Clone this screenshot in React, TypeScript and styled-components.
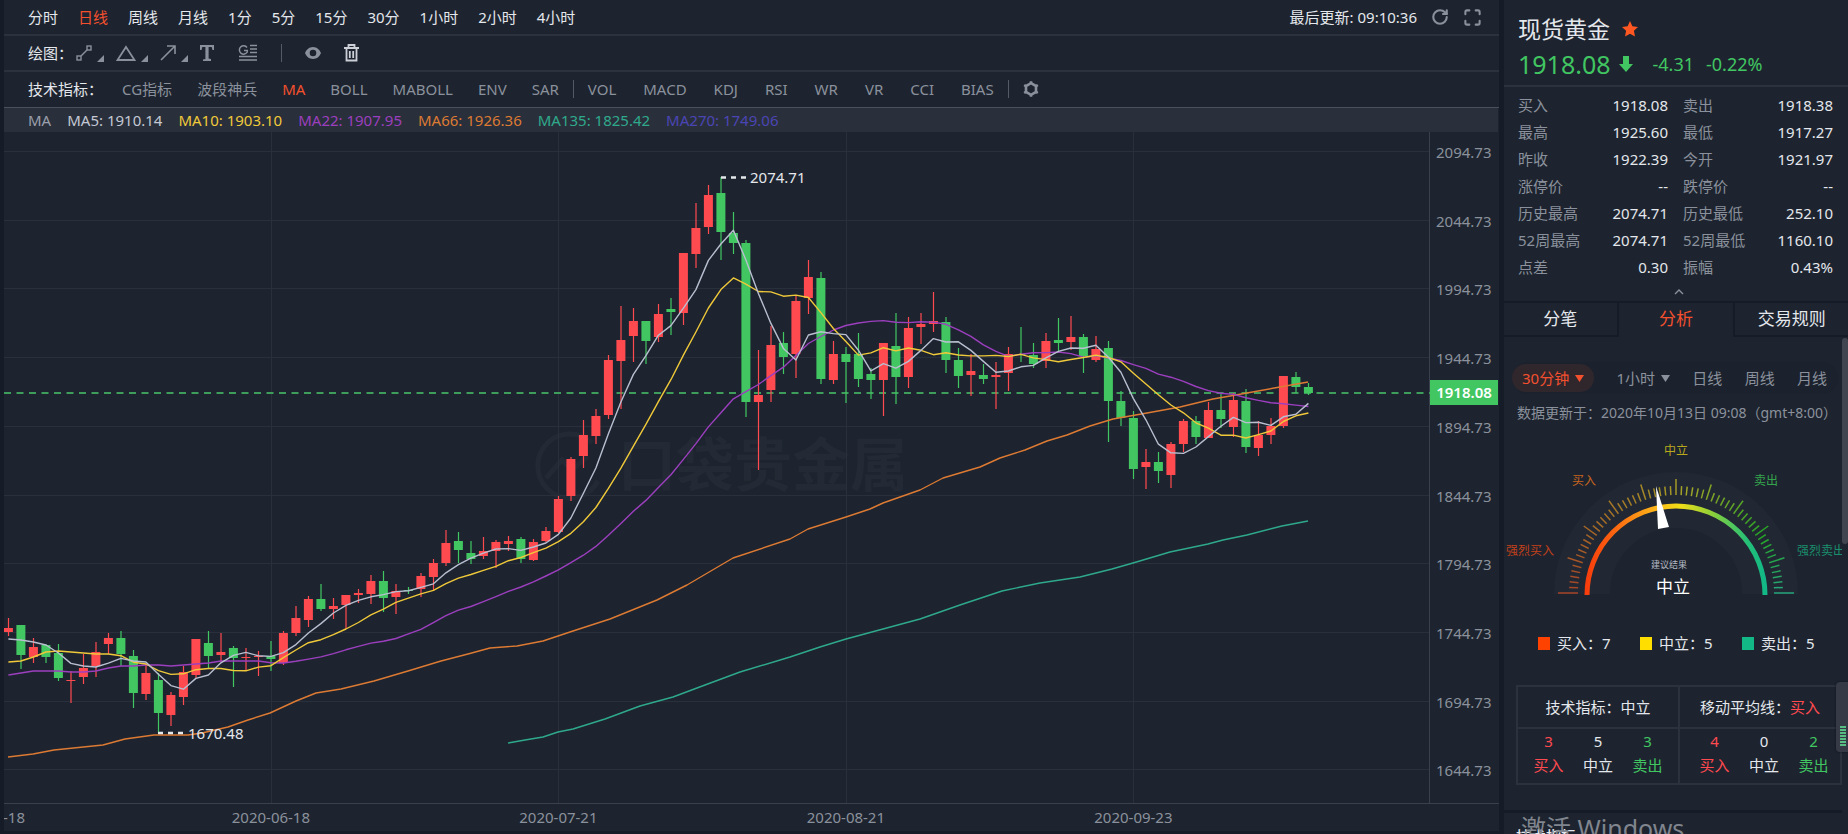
import React from 'react';
import styled, { createGlobalStyle } from 'styled-components';
import { RotateCw, Maximize } from 'lucide-react';

const color = {
  page: '#161c27',
  panel: '#1d242f',
  line: '#2b323e',
  bar: '#2a303b',
  text: '#e4e7ec',
  muted: '#8b919c',
  accent: '#f4502e',
  up: '#ff4a50',
  down: '#41c662',
  gold: '#f0c93a',
  violet: '#9c3fbf',
  amber: '#dd7a33',
  teal: '#2fa98c',
  indigo: '#4a45b5',
};

const fontStack = '"Noto Sans", "Noto Sans CJK SC", sans-serif';

const GlobalStyle = createGlobalStyle`
  *, *::before, *::after { box-sizing: border-box; }
  body {
    margin: 0;
    background: ${color.page};
    color: ${color.text};
    font-family: ${fontStack};
    font-size: 15px;
    line-height: 20px;
    overflow: hidden;
  }
  button { font: inherit; color: inherit; background: none; border: 0; padding: 0; cursor: pointer; }
  table { border-collapse: collapse; border-spacing: 0; }
  th { font-weight: 400; }
`;

const Shell = styled.div`
  display: grid;
  grid-template-columns: minmax(0, 1fr) 344px;
  column-gap: 5px;
  height: 100vh;
  padding-left: 4px;
  overflow: hidden;
`;

/* ---------- chart column ---------- */

const ChartPanel = styled.main`
  background: ${color.panel};
  margin-bottom: 3px;
  overflow: hidden;
`;

const Toolbar = styled.div<{ $gap?: number; $strong?: boolean }>`
  display: flex;
  align-items: center;
  gap: ${(p) => p.$gap ?? 20}px;
  height: 36px;
  padding: 0 17px ${(p) => (p.$strong ? 2 : 0)}px 24px;
  border-bottom: ${(p) => (p.$strong ? `1px solid #4a505c` : `2px solid ${color.line}`)};
  white-space: nowrap;
`;

const ToolLabel = styled.span<{ $push?: number }>`
  margin-right: ${(p) => p.$push ?? 0}px;
`;

const TextButton = styled.button<{ $active?: boolean; $muted?: boolean }>`
  color: ${(p) => (p.$active ? color.accent : p.$muted ? color.muted : color.text)};
`;

const ToolGroup = styled.div<{ $gap: number }>`
  display: flex;
  align-items: center;
  gap: ${(p) => p.$gap}px;
`;

const Spacer = styled.div`
  flex: 1;
`;

const Divider = styled.span<{ $tight?: boolean }>`
  width: 1px;
  height: 18px;
  background: #545a66;
  margin: 0 ${(p) => (p.$tight ? -11 : 0)}px;
`;

const IconButton = styled.button`
  display: inline-flex;
  align-items: center;
  color: ${color.muted};
  svg { display: block; }
`;

const MaBar = styled.div`
  display: flex;
  align-items: center;
  gap: 16px;
  height: 24px;
  padding: 0 24px;
  margin-right: 1px;
  background: ${color.bar};
  white-space: nowrap;
`;

const MaValue = styled.span<{ $color: string }>`
  color: ${(p) => p.$color};
`;

const ChartSvg = styled.svg`
  display: block;
  width: 100%;
  height: auto;
  font-family: ${fontStack};
  font-size: 15px;
`;

/* [wick top, body top, body bottom, wick bottom, rising] in chart units */
type Candle = [number, number, number, number, 0 | 1];

const candles: Candle[] = [
  [618, 628, 632, 636, 1], [625, 625, 655, 669, 0], [638, 647, 657, 663, 1], [644, 645, 657, 663, 0],
  [644, 653, 678, 681, 0], [671, 680, 681, 703, 1], [654, 668, 677, 684, 1], [642, 652, 666, 677, 1],
  [633, 638, 644, 654, 1], [631, 638, 654, 666, 0], [650, 656, 693, 708, 0], [663, 673, 694, 700, 1],
  [673, 680, 713, 733, 0], [692, 695, 715, 726, 1], [666, 672, 697, 705, 1], [639, 639, 675, 678, 1],
  [631, 643, 656, 668, 0], [633, 652, 655, 662, 1], [646, 648, 658, 687, 0], [648, 657, 658, 671, 1],
  [651, 656, 657, 676, 1], [641, 656, 659, 671, 0], [631, 633, 663, 665, 1], [606, 618, 633, 636, 1],
  [596, 599, 620, 627, 1], [584, 599, 609, 611, 0], [598, 606, 609, 619, 1], [595, 595, 605, 629, 1],
  [589, 593, 595, 603, 1], [575, 581, 594, 604, 1], [571, 581, 598, 612, 0], [584, 591, 597, 614, 1],
  [587, 590, 591, 594, 0], [573, 576, 589, 597, 1], [559, 563, 577, 591, 1], [530, 543, 563, 566, 1],
  [532, 541, 550, 563, 0], [541, 553, 559, 564, 0], [537, 551, 556, 559, 1], [540, 542, 551, 568, 1],
  [536, 541, 544, 551, 1], [537, 539, 559, 563, 0], [539, 542, 560, 561, 1], [527, 531, 541, 542, 1],
  [496, 499, 532, 533, 1], [457, 459, 496, 501, 1], [420, 435, 456, 468, 1], [409, 416, 436, 444, 1],
  [355, 360, 415, 419, 1], [306, 340, 361, 409, 1], [308, 321, 336, 362, 1], [321, 321, 341, 364, 0],
  [304, 314, 337, 342, 1], [298, 309, 312, 335, 0], [253, 253, 313, 325, 1], [203, 228, 254, 268, 1],
  [185, 195, 227, 234, 1], [177, 193, 232, 260, 0], [212, 233, 243, 254, 0], [240, 243, 402, 417, 0],
  [350, 395, 402, 470, 1], [326, 345, 390, 402, 1], [332, 343, 357, 374, 0], [296, 301, 354, 378, 1],
  [260, 277, 298, 314, 1], [272, 278, 379, 384, 0], [341, 354, 380, 384, 1], [347, 354, 362, 403, 0],
  [333, 354, 379, 387, 0], [368, 374, 380, 399, 0], [343, 343, 380, 416, 1], [313, 346, 377, 404, 0],
  [317, 328, 377, 388, 1], [313, 324, 327, 344, 1], [292, 321, 324, 332, 1], [317, 322, 360, 373, 0],
  [348, 360, 376, 388, 0], [354, 371, 375, 396, 1], [364, 375, 379, 384, 0], [362, 375, 377, 409, 1],
  [347, 354, 373, 391, 1], [327, 354, 355, 362, 0], [343, 355, 364, 368, 0], [333, 341, 361, 368, 1],
  [318, 340, 343, 352, 0], [316, 337, 342, 350, 1], [334, 337, 356, 373, 0], [336, 349, 360, 362, 1],
  [341, 348, 401, 442, 0], [391, 401, 418, 426, 0], [411, 418, 469, 479, 0], [449, 462, 467, 489, 1],
  [452, 462, 471, 483, 0], [442, 444, 475, 488, 1], [419, 421, 444, 452, 1], [416, 421, 437, 444, 0],
  [402, 410, 438, 438, 1], [393, 410, 419, 428, 0], [393, 400, 427, 437, 1], [389, 401, 447, 453, 0],
  [421, 435, 448, 456, 1], [418, 426, 435, 444, 1], [376, 376, 426, 428, 1], [372, 377, 387, 393, 0],
  [383, 387, 393, 395, 0],
];

const candleX = (i: number) => 8.4 + 12.5 * i;
const closes = candles.map(([, top, bottom, , rising]) => (rising ? top : bottom));

/* The lead holds the averages for the first period-1 candles, whose history is off screen. */
const averagePoints = (period: number, lead: number[]) =>
  closes
    .map((_, i) => {
      const value =
        i < lead.length
          ? lead[i]
          : closes.slice(i - period + 1, i + 1).reduce((sum, v) => sum + v, 0) / period;
      return `${candleX(i)},${value.toFixed(1)}`;
    })
    .join(' ');

const ma5 = averagePoints(5, [639, 640, 642, 645]);
const ma10 = averagePoints(10, [662, 661, 657, 652, 651, 652, 653, 654, 654]);
const ma22 = averagePoints(22, [
  675, 673, 671, 671, 671, 672, 672, 671, 668, 666, 666, 665, 665, 666, 665, 664, 663, 661, 661, 661, 661,
]);
const ma66 =
  '8,757 33,754 54,750 103,745 125,739 154,735 188,735 202,733 228,727 248,720 270,713 296,701 316,693 341,689 374,681 408,671 441,661 468,654 490,648 517,646 543,641 573,631 610,619 657,600 687,585 733,558 790,539 808,529 846,517 870,509 883,503 920,490 943,478 980,467 1000,458 1025,450 1047,441 1067,435 1090,426 1113,419 1147,413 1180,407 1213,399 1247,393 1280,387 1308,382';
const ma135 =
  '508,743 525,740 543,737 558,732 573,729 605,719 640,706 673,697 705,685 740,672 790,657 820,647 846,639 883,629 920,619 960,605 1002,591 1040,583 1080,577 1112,569 1133,563 1170,552 1208,544 1223,540 1247,535 1282,526 1308,521';

const priceLabels = ['2094.73', '2044.73', '1994.73', '1944.73', '1894.73', '1844.73', '1794.73', '1744.73', '1694.73', '1644.73'];
const gridY = (i: number) => Math.round(151 + i * 68.7) + 0.5;
const dateLabels: [number, string][] = [[21, '2020-06-18'], [44, '2020-07-21'], [67, '2020-08-21'], [90, '2020-09-23']];

const PriceChart = () => (
  <ChartSvg viewBox="4 132 1495 699" role="img" aria-label="现货黄金 日线">
    <g fill="none" stroke="#232a35" strokeWidth="5">
      <path d="M592 443 a32 32 0 1 0 6 38" />
      <path d="M546 478 l16 -18 l10 10 l16 -14" />
    </g>
    <text x="618" y="486" fill="#232a35" fontSize="58" fontWeight="700">口袋贵金属</text>

    <g stroke="#29303b" strokeWidth="1">
      {priceLabels.map((label, i) => (
        <line key={label} x1="4" x2="1430" y1={gridY(i)} y2={gridY(i)} />
      ))}
      {dateLabels.map(([i, label]) => (
        <line key={label} x1={Math.round(candleX(i)) + 0.5} x2={Math.round(candleX(i)) + 0.5} y1="131" y2="803" />
      ))}
    </g>
    <g stroke="#3a414d">
      <line x1="1429.5" x2="1429.5" y1="131" y2="803" />
      <line x1="4" x2="1499" y1="803.5" y2="803.5" />
    </g>

    <line x1="4" x2="1430" y1="393" y2="393" stroke="#3f9d5b" strokeWidth="2" strokeDasharray="7 5.5" />

    {candles.map(([high, top, bottom, low, rising], i) => (
      <g key={i} fill={rising ? color.up : color.down}>
        <rect x={candleX(i) - 0.5} y={high} width="1.2" height={low - high} />
        <rect x={candleX(i) - 4.5} y={top} width="9" height={Math.max(bottom - top, 1)} />
      </g>
    ))}

    <g fill="none" strokeWidth="1.4" strokeLinejoin="round">
      <polyline points={ma135} stroke={color.teal} />
      <polyline points={ma66} stroke={color.amber} />
      <polyline points={ma22} stroke={color.violet} />
      <polyline points={ma10} stroke={color.gold} />
      <polyline points={ma5} stroke="#b9bfd0" />
    </g>

    <g stroke={color.text} strokeWidth="2.5" strokeDasharray="5 5">
      <line x1="721" x2="746" y1="177.5" y2="177.5" />
      <line x1="158" x2="183" y1="733" y2="733" />
    </g>
    <g fill={color.text}>
      <text x="750" y="183">2074.71</text>
      <text x="188" y="739">1670.48</text>
    </g>

    <g fill={color.muted}>
      {priceLabels.map((label, i) => (
        <text key={label} x="1436" y={gridY(i) + 6}>{label}</text>
      ))}
      <text x="25" y="823" textAnchor="end">2020-05-18</text>
      {dateLabels.map(([i, label]) => (
        <text key={label} x={candleX(i)} y="823" textAnchor="middle">{label}</text>
      ))}
    </g>
    <rect x="1430" y="380" width="68" height="25" fill={color.down} />
    <text x="1464" y="398" fill="#fff" fontSize="15" fontWeight="600" textAnchor="middle">1918.08</text>
  </ChartSvg>
);

/* ---------- drawing tool icons ---------- */

const Corner = () => <path d="M28 11v7h-7z" fill="currentColor" stroke="none" />;

const SegmentIcon = () => (
  <svg width="28" height="18" viewBox="0 0 28 18" fill="none" stroke="currentColor" strokeWidth="1.4">
    <rect x="1" y="12" width="4" height="4" />
    <rect x="11" y="2" width="4" height="4" />
    <path d="M5 12 11 6" />
    <Corner />
  </svg>
);
const TriangleIcon = () => (
  <svg width="32" height="18" viewBox="-4 0 32 18" fill="none" stroke="currentColor" strokeWidth="1.8">
    <path d="M6 3 14.500 16H-2.500z" />
    <Corner />
  </svg>
);
const ArrowIcon = () => (
  <svg width="28" height="18" viewBox="0 0 28 18" fill="none" stroke="currentColor" strokeWidth="1.6">
    <path d="M1 16 15 2M7 2h8v8" />
    <Corner />
  </svg>
);
const TextIcon = () => (
  <svg width="14" height="16" viewBox="0 0 14 16" fill="currentColor">
    <path d="M0 0h14v5h-1.500l-.8-3H8.600v11.500l2.400.6V16H3v-1.400l2.400-.6V2H2.300l-.8 3H0z" />
  </svg>
);
const GoldenIcon = () => (
  <svg width="20" height="18" viewBox="0 0 20 18" fill="none" stroke="currentColor" strokeWidth="1.5">
    <path d="M9 3.500A4.200 4.200 0 1 0 9.300 8V6.500H6M12 1.500h7M12 5h7M12 8.500h7M1 12.500h18M1 16h18" />
  </svg>
);
const EyeIcon = () => (
  <svg width="16" height="14" viewBox="0 0 16 14" fill="currentColor" fillRule="evenodd">
    <path d="M8 1C4 1 1.200 4 0 7c1.200 3 4 6 8 6s6.800-3 8-6c-1.200-3-4-6-8-6zm0 2.700a3.300 3.300 0 1 1 0 6.600 3.300 3.300 0 0 1 0-6.600z" />
  </svg>
);
const TrashIcon = () => (
  <svg width="15" height="18" viewBox="0 0 15 18" fill="none" stroke="#ccd0d6" strokeWidth="1.8">
    <path d="M0 4h15M4.500 3.500V1h6v2.500M2.500 4v12.500h10V4M5.800 7v7M9.200 7v7" />
  </svg>
);
const GearIcon = () => (
  <svg width="16" height="16" viewBox="0 0 16 16" fill="none" stroke="currentColor">
    <path d="M8 2.200 13 5v6l-5 2.800L3 11V5z" strokeWidth="2.600" />
    <g strokeWidth="2.600">
      <path d="M8 .3v2.400M8 13.300v2.400M14.800 4 12.700 5.300M1.200 4l2.100 1.300M14.800 12l-2.100-1.300M1.200 12l2.100-1.300" />
    </g>
  </svg>
);

const periods = ['分时', '日线', '周线', '月线', '1分', '5分', '15分', '30分', '1小时', '2小时', '4小时'];
const mainIndicators = ['CG指标', '波段神兵', 'MA', 'BOLL', 'MABOLL', 'ENV', 'SAR'];
const subIndicators = ['VOL', 'MACD', 'KDJ', 'RSI', 'WR', 'VR', 'CCI', 'BIAS'];

const DrawTools = styled(ToolGroup)`
  margin-left: -21px;
`;

const averages: [string, string][] = [
  ['MA', '#9a9fab'],
  ['MA5: 1910.14', '#c3c8d4'],
  ['MA10: 1903.10', color.gold],
  ['MA22: 1907.95', color.violet],
  ['MA66: 1926.36', color.amber],
  ['MA135: 1825.42', color.teal],
  ['MA270: 1749.06', color.indigo],
];

/* ---------- quote column ---------- */

const Side = styled.aside`
  position: relative;
  display: flex;
  flex-direction: column;
  min-height: 0;
  overflow: hidden;
  background: ${color.panel};
`;

const QuoteHead = styled.header`
  height: 87px;
  padding: 13px 14px 0;
  border-bottom: 2px solid ${color.line};
`;

const HeadRow = styled.div<{ $gap: number }>`
  display: flex;
  align-items: center;
  gap: ${(p) => p.$gap}px;
  height: 32px;
  margin-bottom: 3px;
`;

const Title = styled.h1`
  margin: 0;
  font-size: 23px;
  line-height: 32px;
  font-weight: 400;
`;

const Price = styled.span`
  font-size: 25px;
  line-height: 32px;
  color: ${color.down};
`;

const Change = styled.span`
  display: flex;
  gap: 12px;
  margin-left: 12px;
  font-size: 18px;
  color: ${color.down};
`;

const QuoteTable = styled.table`
  width: 315px;
  margin: 4px 14px 0;
  table-layout: fixed;
  th, td { height: 27px; padding: 0; }
  th { text-align: left; color: ${color.muted}; white-space: nowrap; width: 75px; }
  td { text-align: right; width: 75px; }
  th + td + th { padding-left: 15px; width: 95px; }
  th + td + th + td { width: 70px; }
`;

const Collapse = styled.button`
  display: flex;
  justify-content: center;
  align-items: center;
  height: 21px;
  width: 100%;
  padding: 3px 0 0 6px;
  color: ${color.muted};
`;

const Tabs = styled.div`
  display: grid;
  grid-template-columns: repeat(3, 1fr);
  flex: none;
  height: 36px;
  border-top: 2px solid ${color.page};
`;

const Tab = styled.button<{ $active?: boolean }>`
  font-size: 17px;
  color: ${(p) => (p.$active ? color.accent : color.text)};
  border: solid ${(p) => (p.$active ? color.panel : color.page)};
  border-width: 0 2px 2px;
  &:first-child { border-left: 0; }
  &:last-child { border-right: 0; }
`;

const Scroller = styled.section`
  position: relative;
  flex: 1;
  min-height: 0;
  overflow: hidden;
  padding-right: 6px;
`;

const ScrollThumb = styled.span`
  position: absolute;
  top: 1px;
  right: 0;
  width: 6px;
  height: 206px;
  border-radius: 3px;
  background: #404550;
`;

const IntervalBar = styled.div`
  display: flex;
  align-items: center;
  justify-content: space-between;
  height: 32px;
  margin: 25px 4px 0 8px;
  padding-right: 11px;
  border-radius: 16px;
  background: #1b222d;
`;

const Interval = styled.button<{ $active?: boolean }>`
  display: flex;
  align-items: center;
  gap: 6px;
  height: 28px;
  padding: 0 ${(p) => (p.$active ? 10 : 0)}px;
  border-radius: 14px;
  color: ${(p) => (p.$active ? color.accent : color.muted)};
  background: ${(p) => (p.$active ? '#30272d' : 'none')};
`;

const Updated = styled.p`
  margin: 9px 0 4px 13px;
  font-size: 14px;
  color: ${color.muted};
  white-space: nowrap;
`;

const GaugeSvg = styled.svg`
  display: block;
  width: 100%;
  height: auto;
  font-family: ${fontStack};
  font-size: 12px;
`;

const CX = 172;
const CY = 166;
const polar = (deg: number, r: number) => {
  const a = (deg * Math.PI) / 180;
  return [CX - r * Math.cos(a), CY - r * Math.sin(a)];
};

const tickColor = (deg: number) => {
  const hue = deg < 90 ? 14 + (deg / 90) * 40 : 54 + ((deg - 90) / 90) * 106;
  return `hsl(${hue} 62% 40%)`;
};

const Gauge = () => (
  <GaugeSvg viewBox="0 0 338 176" role="img" aria-label="建议结果 中立">
    <defs>
      <linearGradient id="dial" x1="0" x2="1" y1="0" y2="0">
        <stop offset="0" stopColor="#f83d0c" />
        <stop offset=".15" stopColor="#fb6410" />
        <stop offset=".38" stopColor="#fdb419" />
        <stop offset=".52" stopColor="#f2dd17" />
        <stop offset=".7" stopColor="#8ed038" />
        <stop offset=".9" stopColor="#25c077" />
        <stop offset="1" stopColor="#12b886" />
      </linearGradient>
    </defs>
    <path d="M78 167a94 94 0 0 1 188 0" fill="none" stroke="#212833" strokeWidth="56" />
    {Array.from({ length: 61 }, (_, i) => {
      const deg = i * 3;
      const [x1, y1] = polar(deg, 98);
      const [x2, y2] = polar(deg, i % 6 === 0 ? (i % 60 === 0 ? 118 : 114) : 107);
      return <line key={i} x1={x1} y1={y1} x2={x2} y2={y2} stroke={tickColor(deg)} strokeWidth="1.5" />;
    })}
    <path d={`M${CX - 89} 168a89 89 0 0 1 178 0`} fill="none" stroke="url(#dial)" strokeWidth="5" />
    <path d="M152 59l2 43 11-2z" fill="#fff" />
    <text x="172" y="28" fill="#b9a81c" textAnchor="middle">中立</text>
    <text x="80" y="58" fill="#c8641e" textAnchor="middle">买入</text>
    <text x="262" y="58" fill="#35a34c" textAnchor="middle">卖出</text>
    <text x="2" y="128" fill="#c2401a">强烈买入</text>
    <text x="293" y="128" fill="#1a8d6c">强烈卖出</text>
    <text x="165" y="141" fill="#b5bac4" fontSize="9" textAnchor="middle">建议结果</text>
    <text x="169" y="166" fill="#fff" fontSize="17" textAnchor="middle">中立</text>
  </GaugeSvg>
);

const Legend = styled.ul`
  display: flex;
  gap: 30px;
  margin: 30px 0 0;
  padding: 0 0 0 34px;
  list-style: none;
  li { display: flex; align-items: center; gap: 7px; width: 72px; white-space: nowrap; }
`;

const Swatch = styled.span<{ $color: string }>`
  flex: none;
  width: 12px;
  height: 13px;
  background: ${(p) => p.$color};
`;

const Summary = styled.table`
  width: calc(100% - 12px);
  margin: 32px 0 0 12px;
  table-layout: fixed;
  border: 2px solid ${color.line};
  th, td { padding: 0; text-align: center; }
  th { height: 42px; border: 2px solid ${color.line}; }
  td { height: 25px; }
  tr:last-child td { height: 31px; padding-bottom: 7px; }
  td:nth-child(1) { padding-left: 8px; }
  td:nth-child(3) { padding-right: 8px; }
  td:nth-child(4) { padding-left: 16px; border-left: 2px solid ${color.line}; }
  td:nth-child(5) { padding-left: 8px; }
`;

const Tone = styled.span<{ $tone: 'buy' | 'hold' | 'sell' }>`
  color: ${(p) => ({ buy: color.up, hold: color.text, sell: color.down })[p.$tone]};
`;

const NextSection = styled.section`
  margin-top: 25px;
  padding: 13px 12px 0;
  border-top: 3px solid ${color.page};
  h2 { margin: 0; font-size: 15px; line-height: 20px; font-weight: 500; }
`;

const Activation = styled.div`
  position: absolute;
  left: 17px;
  bottom: -12px;
  font-size: 25px;
  line-height: 36px;
  color: #80858e;
  white-space: nowrap;
`;

const EdgeWidget = styled.div`
  position: absolute;
  right: 0;
  top: 682px;
  width: 12px;
  height: 70px;
  padding: 44px 2px 5px 4px;
  border-radius: 4px 0 0 4px;
  background: #363a47;
  box-shadow: 0 0 2px #0d1118;
  &::before {
    content: '';
    display: block;
    height: 100%;
    background: repeating-linear-gradient(#57bd82 0 2px, #363a47 2px 3px);
  }
`;

const quotes = [
  ['买入', '1918.08', '卖出', '1918.38'],
  ['最高', '1925.60', '最低', '1917.27'],
  ['昨收', '1922.39', '今开', '1921.97'],
  ['涨停价', '--', '跌停价', '--'],
  ['历史最高', '2074.71', '历史最低', '252.10'],
  ['52周最高', '2074.71', '52周最低', '1160.10'],
  ['点差', '0.30', '振幅', '0.43%'],
];

const tones = ['buy', 'hold', 'sell', 'buy', 'hold', 'sell'] as const;

const Caret = () => (
  <svg width="9" height="7" viewBox="0 0 9 7" fill="currentColor"><path d="M0 0h9L4.500 7z" /></svg>
);

export default function App() {
  return (
    <>
      <GlobalStyle />
      <Shell>
        <ChartPanel>
          <Toolbar>
            {periods.map((p) => (
              <TextButton key={p} $active={p === '日线'}>{p}</TextButton>
            ))}
            <Spacer />
            <ToolGroup $gap={14}>
              <span>最后更新: 09:10:36</span>
              <IconButton aria-label="刷新"><RotateCw size={18} strokeWidth={2.8} /></IconButton>
              <IconButton aria-label="全屏"><Maximize size={19} strokeWidth={2.6} /></IconButton>
            </ToolGroup>
          </Toolbar>
          <Toolbar $gap={24}>
            <ToolLabel>绘图：</ToolLabel>
            <DrawTools $gap={12}>
              <IconButton aria-label="线段"><SegmentIcon /></IconButton>
              <IconButton aria-label="图形"><TriangleIcon /></IconButton>
              <IconButton aria-label="箭头"><ArrowIcon /></IconButton>
              <IconButton aria-label="文字"><TextIcon /></IconButton>
            </DrawTools>
            <ToolGroup $gap={23}>
              <IconButton aria-label="黄金分割"><GoldenIcon /></IconButton>
              <Divider />
              <IconButton aria-label="显示"><EyeIcon /></IconButton>
              <IconButton aria-label="删除"><TrashIcon /></IconButton>
            </ToolGroup>
          </Toolbar>
          <Toolbar $gap={25} $strong>
            <ToolLabel $push={-6}>技术指标：</ToolLabel>
            {mainIndicators.map((name) => (
              <TextButton key={name} $muted $active={name === 'MA'}>{name}</TextButton>
            ))}
            <Divider $tight />
            <ToolGroup $gap={27}>
              {subIndicators.map((name) => (
                <TextButton key={name} $muted>{name}</TextButton>
              ))}
            </ToolGroup>
            <Divider $tight />
            <IconButton aria-label="指标设置"><GearIcon /></IconButton>
          </Toolbar>
          <MaBar>
            {averages.map(([label, c]) => (
              <MaValue key={label} $color={c}>{label}</MaValue>
            ))}
          </MaBar>
          <PriceChart />
        </ChartPanel>

        <Side>
          <QuoteHead>
            <HeadRow $gap={12}>
              <Title>现货黄金</Title>
              <svg width="16" height="16" viewBox="0 0 16 16" fill="#ff5722">
                <path d="M8 0l2.400 5.200 5.600.7-4.100 3.900 1.100 5.700L8 12.700l-5 2.800 1.100-5.700L0 5.900l5.600-.7z" />
              </svg>
            </HeadRow>
            <HeadRow $gap={8}>
              <Price>1918.08</Price>
              <svg width="14" height="16" viewBox="0 0 14 16" fill={color.down}>
                <path d="M4 0h6v8h4l-7 8-7-8h4z" />
              </svg>
              <Change>
                <span>-4.31</span>
                <span>-0.22%</span>
              </Change>
            </HeadRow>
          </QuoteHead>
          <QuoteTable>
            <tbody>
              {quotes.map(([a, av, b, bv]) => (
                <tr key={a}>
                  <th scope="row">{a}</th>
                  <td>{av}</td>
                  <th scope="row">{b}</th>
                  <td>{bv}</td>
                </tr>
              ))}
            </tbody>
          </QuoteTable>
          <Collapse aria-label="收起">
            <svg width="10" height="6" viewBox="0 0 10 6" fill="none" stroke="currentColor" strokeWidth="1.400">
              <path d="M1 5l4-4 4 4" />
            </svg>
          </Collapse>
          <Tabs>
            <Tab>分笔</Tab>
            <Tab $active>分析</Tab>
            <Tab>交易规则</Tab>
          </Tabs>
          <Scroller>
            <IntervalBar>
              <Interval $active>30分钟 <Caret /></Interval>
              <Interval>1小时 <Caret /></Interval>
              <Interval>日线</Interval>
              <Interval>周线</Interval>
              <Interval>月线</Interval>
            </IntervalBar>
            <Updated>数据更新于：2020年10月13日 09:08（gmt+8:00）</Updated>
            <Gauge />
            <Legend>
              <li><Swatch $color="#ff4200" />买入：7</li>
              <li><Swatch $color="#ffde00" />中立：5</li>
              <li><Swatch $color="#12b886" />卖出：5</li>
            </Legend>
            <Summary>
              <thead>
                <tr>
                  <th colSpan={3}>技术指标：中立</th>
                  <th colSpan={3}>移动平均线：<Tone $tone="buy">买入</Tone></th>
                </tr>
              </thead>
              <tbody>
                <tr>
                  {[3, 5, 3, 4, 0, 2].map((n, i) => (
                    <td key={i}><Tone $tone={tones[i]}>{n}</Tone></td>
                  ))}
                </tr>
                <tr>
                  {['买入', '中立', '卖出', '买入', '中立', '卖出'].map((t, i) => (
                    <td key={i}><Tone $tone={tones[i]}>{t}</Tone></td>
                  ))}
                </tr>
              </tbody>
            </Summary>
            <NextSection>
              <h2>技术指标</h2>
            </NextSection>
            <ScrollThumb />
          </Scroller>
          <Activation>激活 Windows</Activation>
          <EdgeWidget />
        </Side>
      </Shell>
    </>
  );
}
